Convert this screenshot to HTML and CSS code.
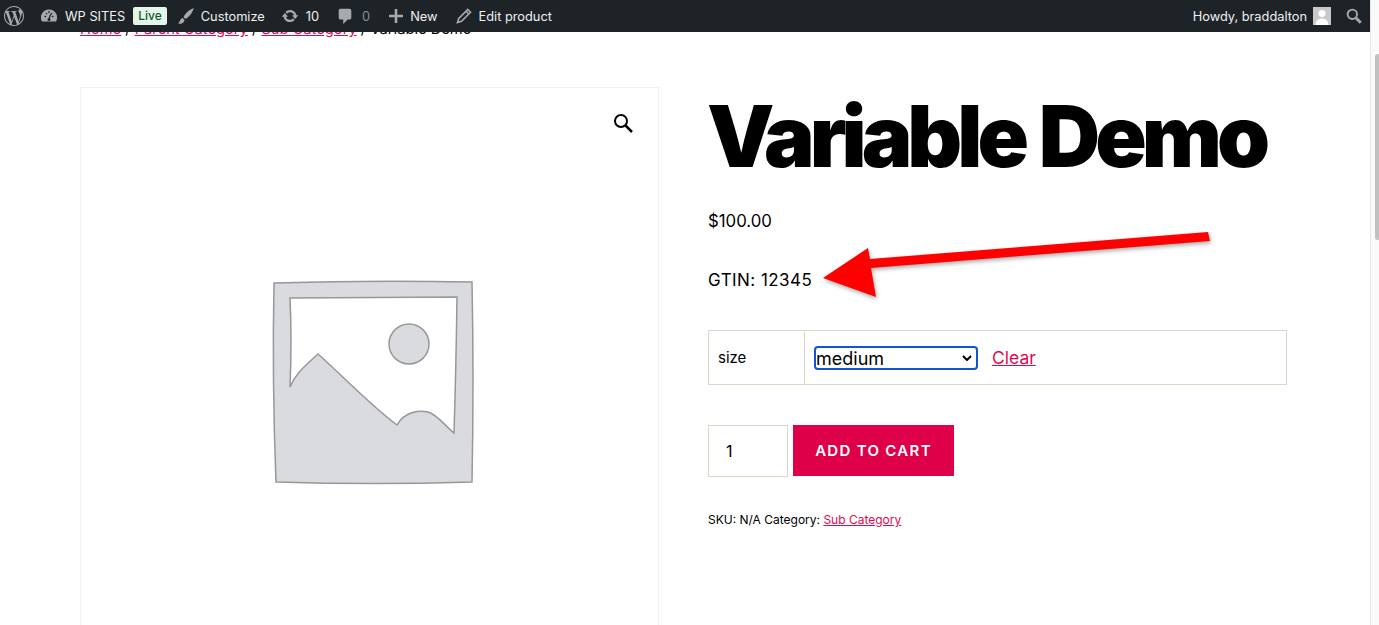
FILE: index.html
```html
<!DOCTYPE html>
<html lang="en">

<head>
    <meta charset="UTF-8">
    <meta name="viewport" content="width=device-width, initial-scale=1.0">
    <title>Variable Demo</title>

    <link rel="stylesheet" href="styles.css">

</head>

<body>

    <div class="page">

        <!-- Admin bar, sits on top of the page content -->
        <div class="admin-bar">
            <div class="bar-group">
                <a class="bar-item wp-logo" href="#">
                    <svg class="icon icon-20" viewBox="0 0 24 24"><path d="M21.469 6.825c.84 1.537 1.318 3.3 1.318 5.175 0 3.979-2.156 7.456-5.363 9.325l3.295-9.527c.615-1.54.82-2.771.82-3.864 0-.405-.026-.78-.07-1.11m-7.981.105c.647-.03 1.232-.105 1.232-.105.582-.075.514-.93-.067-.899 0 0-1.755.135-2.88.135-1.064 0-2.85-.15-2.85-.15-.585-.03-.661.855-.075.885 0 0 .54.061 1.125.09l1.68 4.605-2.37 7.08L5.354 6.9c.649-.03 1.234-.1 1.234-.1.585-.075.516-.93-.065-.896 0 0-1.746.138-2.874.138-.2 0-.438-.008-.69-.015C4.911 3.15 8.235 1.215 12 1.215c2.809 0 5.365 1.072 7.286 2.833-.046-.003-.091-.009-.141-.009-1.06 0-1.812.923-1.812 1.914 0 .89.513 1.643 1.06 2.531.411.72.89 1.643.89 2.977 0 .915-.354 1.994-.821 3.479l-1.075 3.585-3.9-11.61.001.014zM12 22.784c-1.059 0-2.081-.153-3.048-.437l3.237-9.406 3.315 9.087c.024.053.05.101.078.149-1.12.393-2.325.609-3.582.609M1.211 12c0-1.564.336-3.05.935-4.39L7.29 21.709C3.694 19.96 1.212 16.271 1.211 12M12 0C5.385 0 0 5.385 0 12s5.385 12 12 12 12-5.385 12-12S18.615 0 12 0"/></svg>
                </a>
                <a class="bar-item site-name" href="#">
                    <svg class="icon icon-16" viewBox="0 0 16 16"><path d="M8 1.500a8 8 0 0 0-6.900 12.100h13.800A8 8 0 0 0 8 1.500z"/><path class="gauge-marks" d="M8 3v2M3.500 8l1.600 1M12.500 8l-1.600 1M5 5l1 1.400M11 5l-1 1.400M9.600 6.200 8 11"/><circle class="gauge-marks-dot" cx="8" cy="11.400" r="1.500"/></svg>
                    <span>WP SITES</span>
                </a>
                <span class="live-badge">Live</span>
                <a class="bar-item customize" href="#">
                    <svg class="icon icon-16" viewBox="0 0 16 16"><path d="M15.800 0C11.600 1.600 7 5.400 5.500 9.200l2 1.700C11.300 8.900 14.700 4.500 15.800 0zM4.600 10C2.200 10.500 2 13.300.3 15.800c2.300.3 5.700-.4 6.200-3.800z"/></svg>
                    <span>Customize</span>
                </a>
                <a class="bar-item updates" href="#">
                    <svg class="icon icon-18" viewBox="0 0 20 20"><path d="M10.2 3.28c3.53 0 6.43 2.61 6.92 6h2.08l-3.5 4-3.5-4h2.32c-.45-1.97-2.21-3.45-4.32-3.45-1.45 0-2.73.71-3.54 1.78L4.95 5.66C6.23 4.2 8.11 3.28 10.2 3.28zm-.4 13.44c-3.52 0-6.43-2.61-6.92-6H.8l3.5-4c1.17 1.33 2.33 2.67 3.5 4H5.48c.45 1.97 2.21 3.45 4.32 3.45 1.45 0 2.73-.71 3.54-1.78l1.71 1.95c-1.28 1.46-3.15 2.38-5.25 2.38z"/></svg>
                    <span>10</span>
                </a>
                <a class="bar-item comments" href="#">
                    <svg class="icon icon-18" viewBox="0 0 20 20"><path d="M5 2h10c1.100 0 2 .9 2 2v8c0 1.100-.9 2-2 2h-2l-5 5v-5H5c-1.100 0-2-.9-2-2V4c0-1.100.9-2 2-2z"/></svg>
                    <span class="muted">0</span>
                </a>
                <a class="bar-item new-item" href="#">
                    <svg class="icon icon-14" viewBox="0 0 14 14"><path d="M5.700 0h2.600v5.700H14v2.600H8.300V14H5.700V8.300H0V5.700h5.700z"/></svg>
                    <span>New</span>
                </a>
                <a class="bar-item edit" href="#">
                    <svg class="icon icon-16" viewBox="0 0 16 16"><path class="pencil" d="M11.800 1.500 14.500 4.200 5.500 13.200 1.500 14.500 2.800 10.500zM10 3.300l2.700 2.700"/></svg>
                    <span>Edit product</span>
                </a>
            </div>
            <div class="bar-group">
                <a class="bar-item howdy" href="#">
                    <span>Howdy, braddalton</span>
                    <svg class="avatar" viewBox="0 0 18 18"><rect width="18" height="18" fill="#c9c9c9"/><circle cx="9" cy="6.500" r="3.600" fill="#fff"/><path d="M2.500 18c.3-4.500 3-6.500 6.500-6.500s6.200 2 6.500 6.500z" fill="#fff"/></svg>
                </a>
                <a class="bar-item bar-search" href="#">
                    <svg class="icon icon-16" viewBox="0 0 16 16"><circle class="search-line" cx="6.300" cy="6.300" r="4.700"/><path class="search-line thick" d="M9.800 9.800 14.700 14.700"/></svg>
                </a>
            </div>
        </div>

        <div class="content">
            <nav class="breadcrumb">
                <a href="#">Home</a> / <a href="#">Parent Category</a> / <a href="#">Sub Category</a> / Variable Demo
            </nav>

            <div class="product">
                <div class="gallery">
                    <a class="zoom-trigger" href="#" aria-label="View full-screen image gallery">
                        <svg viewBox="0 0 20 20" width="20" height="20"><circle cx="8" cy="8" r="6" fill="none" stroke="#000" stroke-width="2"/><path d="M12.500 12.500 19 19" stroke="#000" stroke-width="2.500"/></svg>
                    </a>
                    <svg class="placeholder" viewBox="250 260 240 240" width="240" height="240">
                        <path class="placeholder-fill" fill-rule="evenodd" d="M274 283 Q370 280 472 282 Q474 380 472 482 Q375 485 276 482 Q272 380 274 283z M290 298 L457 297 Q456 370 454 433 C445 426 438 415 428 412 C420 410 405 411 397 425 C370 405 345 378 318 354 C305 366 295 374 290 387 Q292 340 290 298z"/>
                        <circle class="placeholder-fill" cx="409" cy="344" r="20"/>
                    </svg>
                </div>

                <div class="summary">
                    <h1 class="product-title">Variable Demo</h1>
                    <p class="price">$100.00</p>
                    <p class="gtin">GTIN: 12345</p>

                    <table class="variations">
                        <tr>
                            <th>size</th>
                            <td>
                                <div class="variation-value">
                                    <select class="size-select">
                                        <option>medium</option>
                                        <option>small</option>
                                        <option>large</option>
                                    </select>
                                    <a class="reset" href="#">Clear</a>
                                </div>
                            </td>
                        </tr>
                    </table>

                    <form class="cart">
                        <input class="qty" type="number" value="1">
                        <button class="add-to-cart" type="button">ADD TO CART</button>
                    </form>

                    <p class="meta">SKU: N/A Category: <a href="#">Sub Category</a></p>
                </div>
            </div>
        </div>

        <!-- Annotation drawn over the screenshot -->
        <svg class="arrow" viewBox="0 0 420 90" width="420" height="90">
            <path d="M385 0 387 9 48 36 53 65 0 46 45 16 47 27z"/>
        </svg>
    </div>

    <div class="scrollbar">
        <div class="scrollbar-thumb"></div>
    </div>

</body>

</html>
```

FILE: styles.css
```css
html,
body {
    height: 100%;
    margin: 0;
}

body {
    display: flex;
    overflow: hidden;
    font-family: Inter, "Liberation Sans", sans-serif;
    color: #000;
    background-color: #fff;
}

a {
    color: #de0a4f;
}

.page {
    position: relative;
    flex: 1;
    overflow: hidden;
}

/* Admin bar */
.admin-bar {
    position: absolute;
    top: 0;
    left: 0;
    right: 0;
    z-index: 5;
    height: 32px;
    display: flex;
    justify-content: space-between;
    background-color: #1d2327;
    font-size: 12.8px;
    color: #f0f0f1;
}

.bar-group {
    display: flex;
    align-items: center;
}

.bar-item {
    display: flex;
    align-items: center;
    color: #f0f0f1;
    text-decoration: none;
}

.icon {
    fill: #a7aaad;
    flex: none;
}

.icon-14 {
    width: 14px;
    height: 14px;
}

.icon-16 {
    width: 16px;
    height: 16px;
}

.icon-18 {
    width: 18px;
    height: 18px;
}

.icon-20 {
    width: 20px;
    height: 20px;
}

.wp-logo {
    margin-left: 4px;
}

.site-name {
    margin-left: 17px;
    gap: 8px;
}

.live-badge {
    margin-left: 8px;
    padding: 0 5px;
    height: 18px;
    line-height: 18px;
    border-radius: 2px;
    background-color: #e5f5ea;
    color: #0a5c2b;
    font-size: 12px;
    font-weight: 500;
}

.customize {
    margin-left: 11px;
    gap: 7px;
}

.updates {
    margin-left: 16px;
    gap: 7px;
}

.comments {
    margin-left: 17px;
    gap: 8px;
}

.muted {
    color: #8c8f94;
}

.new-item {
    margin-left: 19px;
    gap: 7px;
}

.edit {
    margin-left: 18px;
    gap: 7px;
}

.pencil {
    fill: none;
    stroke: #a7aaad;
    stroke-width: 1.6;
}

.howdy {
    gap: 6px;
}

.avatar {
    width: 18px;
    height: 18px;
}

.bar-search {
    margin-left: 15px;
    margin-right: 8px;
}

.search-line {
    fill: none;
    stroke: #a7aaad;
    stroke-width: 1.9;
}

.thick {
    stroke-width: 3;
}

.gauge-marks {
    fill: none;
    stroke: #1d2327;
    stroke-width: 1.2;
}

.gauge-marks-dot {
    fill: #1d2327;
}

/* Page content */
.content {
    padding: 19px 0 0 80px;
}

.breadcrumb {
    font-size: 14.7px;
    line-height: 20px;
    color: #000;
}

.product {
    display: flex;
    margin-top: 48px;
}

.gallery {
    position: relative;
    box-sizing: border-box;
    width: 579px;
    height: 600px;
    padding: 172px 0 0 169px;
    border: 1px solid #f1f1f1;
}

.zoom-trigger {
    position: absolute;
    top: 25px;
    right: 25px;
}

.placeholder {
    display: block;
    filter: blur(0.4px);
}

.placeholder-fill {
    fill: #dadbdf;
    stroke: #97979b;
    stroke-width: 1.5;
}

.summary {
    width: 579px;
    margin-left: 49px;
}

.product-title {
    margin: 0 0 0 -1px;
    font-size: 85px;
    font-weight: 900;
    line-height: 100px;
    letter-spacing: -5px;
    word-spacing: 3px;
    white-space: nowrap;
}

.price {
    margin: 23px 0 0;
    font-size: 16.8px;
    line-height: 22px;
}

.gtin {
    margin: 37px 0 0;
    font-size: 17px;
    line-height: 22px;
    letter-spacing: 0.45px;
}

.variations {
    width: 100%;
    height: 55px;
    margin-top: 39px;
    border-collapse: collapse;
}

.variations th,
.variations td {
    padding: 0 9px;
    border: 1px solid #ddd7c7;
}

.variations th {
    width: 77px;
    text-align: left;
    font-size: 15px;
    font-weight: 400;
}

.variation-value {
    display: flex;
    align-items: center;
    gap: 14px;
}

/* appearance none so the text can start right at the border, arrow drawn below */
.size-select {
    box-sizing: border-box;
    width: 164px;
    height: 24px;
    padding: 0;
    border: 2px solid #0f56cf;
    border-radius: 4px;
    appearance: none;
    background: #fff url("data:image/svg+xml,%3Csvg xmlns='http://www.w3.org/2000/svg' width='10' height='6'%3E%3Cpath d='M1 1l4 4 4-4' fill='none' stroke='%23000' stroke-width='2'/%3E%3C/svg%3E") no-repeat right 4px center;
    font-family: Inter, "Liberation Sans", sans-serif;
    font-size: 18px;
    color: #000;
}

.reset {
    font-size: 17.5px;
}

.cart {
    display: flex;
    align-items: flex-start;
    gap: 5px;
    margin-top: 40px;
}

.qty {
    box-sizing: border-box;
    width: 80px;
    height: 52px;
    padding: 0 17px;
    border: 1px solid #ddd7c7;
    background-color: #fff;
    font-family: Inter, "Liberation Sans", sans-serif;
    font-size: 16px;
    color: #000;
}

.add-to-cart {
    width: 161px;
    height: 51px;
    border: none;
    background-color: #de0049;
    color: #fff;
    font-family: Inter, "Liberation Sans", sans-serif;
    font-size: 15px;
    font-weight: 600;
    letter-spacing: 1.3px;
}

.meta {
    margin: 34px 0 0;
    font-size: 12px;
    line-height: 18px;
}

/* Red arrow annotation */
.arrow {
    position: absolute;
    left: 823px;
    top: 232px;
    fill: #ff0000;
    filter: drop-shadow(1px 2px 2px rgba(0, 0, 0, 0.35));
}

/* Fake scrollbar on the right */
.scrollbar {
    flex: none;
    box-sizing: border-box;
    width: 9px;
    padding: 54px 0 0 4px;
    border-left: 1px solid #e6e6e6;
    background-color: #fafafa;
}

.scrollbar-thumb {
    height: 186px;
    border-radius: 3px 0 0 3px;
    background-color: #c1c1c1;
}
```
